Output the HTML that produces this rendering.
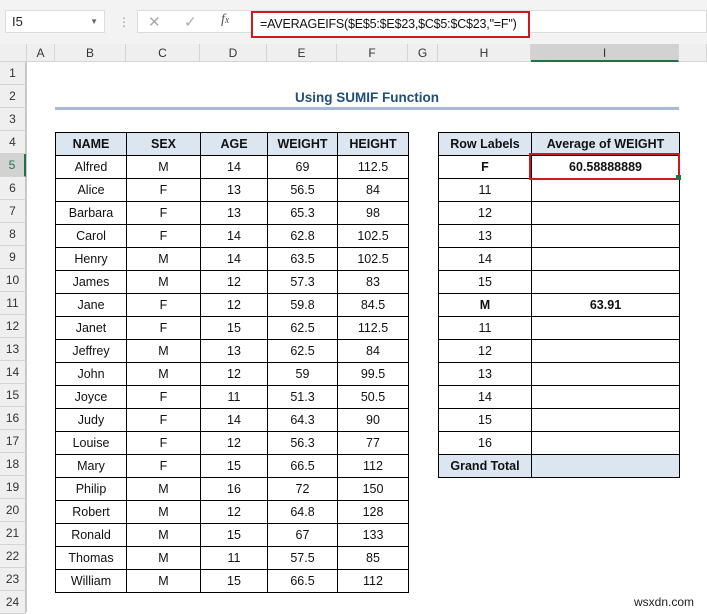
<!DOCTYPE html><html><head><style>
body{margin:0;width:707px;height:612px;overflow:hidden;background:#fff;font-family:"Liberation Sans",sans-serif;position:relative}
.a{position:absolute}
.top{left:0;top:0;width:707px;height:44px;background:#f3f3f3}
.ch{top:44px;height:18px;background:#efefef;border-bottom:1px solid #d4d4d4;font-size:12px;color:#333;text-align:center;line-height:18px;box-sizing:border-box;border-right:1px solid #d4d4d4}
.rh{left:0;width:26px;height:23px;background:#efefef;border-bottom:1px solid #d4d4d4;border-right:1px solid #c8c8c8;box-sizing:border-box;font-size:12px;color:#333;text-align:center;line-height:23px}
table{border-collapse:collapse;position:absolute;font-size:12.5px;font-family:"Liberation Sans",sans-serif;table-layout:fixed}
tr{height:23px}
td{border:1px solid #000;padding:0;text-align:center;color:#111;line-height:14px}
.h td{background:#dce6f1}
b{font-weight:bold}
</style></head><body>
<div class="a top"></div>
<div class="a" style="left:5px;top:10px;width:100px;height:23px;background:#fff;border:1px solid #dcdcdc;box-sizing:border-box;font-size:13px;line-height:21px;padding-left:6px;color:#222">I5<span style="position:absolute;right:6px;top:0;font-size:8px;color:#666">▼</span></div>
<div class="a" style="left:118px;top:15px;color:#999;font-size:12px">⋮</div>
<div class="a" style="left:137px;top:10px;width:570px;height:23px;background:#fff;border:1px solid #dcdcdc;box-sizing:border-box"></div>
<div class="a" style="left:148px;top:13px;color:#aaa;font-size:15px">✕</div>
<div class="a" style="left:184px;top:13px;color:#aaa;font-size:15px">✓</div>
<div class="a" style="left:221px;top:12px;color:#555;font-size:14px;font-style:italic;font-family:'Liberation Serif',serif">f<span style="font-size:10px">x</span></div>
<div class="a" style="left:251px;top:11px;width:279px;height:27px;border:2px solid #d0191f;box-sizing:border-box;background:#fff;font-size:12.5px;line-height:22px;padding-left:7px;color:#111;white-space:nowrap;letter-spacing:-0.2px">=AVERAGEIFS($E$5:$E$23,$C$5:$C$23,"=F")</div>
<div class="a ch" style="left:0;width:27px"></div>
<div class="a ch" style="left:27px;width:28px">A</div>
<div class="a ch" style="left:55px;width:71px">B</div>
<div class="a ch" style="left:126px;width:74px">C</div>
<div class="a ch" style="left:200px;width:67px">D</div>
<div class="a ch" style="left:267px;width:70px">E</div>
<div class="a ch" style="left:337px;width:71px">F</div>
<div class="a ch" style="left:408px;width:30px">G</div>
<div class="a ch" style="left:438px;width:93px">H</div>
<div class="a ch" style="left:531px;width:148px;background:#d2d2d2;border-bottom:2px solid #217346">I</div>
<div class="a ch" style="left:679px;width:28px"></div>
<div class="a" style="left:0;top:62px;width:27px;height:550px;background:#efefef;border-right:1px solid #c8c8c8;box-sizing:border-box"></div>
<div id="rows"></div>
<div class="a" style="left:55px;top:88px;width:624px;text-align:center;font-weight:bold;font-size:13.5px;color:#1f4e79;line-height:20px">Using SUMIF Function</div>
<div class="a" style="left:55px;top:107px;width:624px;height:3px;background:#a5bad6"></div>
<table style="left:55px;top:132px;width:353px">
<colgroup><col style="width:71px"><col style="width:74px"><col style="width:67px"><col style="width:70px"><col style="width:71px"></colgroup>
<tr class="h"><td><b>NAME</b></td><td><b>SEX</b></td><td><b>AGE</b></td><td><b>WEIGHT</b></td><td><b>HEIGHT</b></td></tr>
<tr><td>Alfred</td><td>M</td><td>14</td><td>69</td><td>112.5</td></tr>
<tr><td>Alice</td><td>F</td><td>13</td><td>56.5</td><td>84</td></tr>
<tr><td>Barbara</td><td>F</td><td>13</td><td>65.3</td><td>98</td></tr>
<tr><td>Carol</td><td>F</td><td>14</td><td>62.8</td><td>102.5</td></tr>
<tr><td>Henry</td><td>M</td><td>14</td><td>63.5</td><td>102.5</td></tr>
<tr><td>James</td><td>M</td><td>12</td><td>57.3</td><td>83</td></tr>
<tr><td>Jane</td><td>F</td><td>12</td><td>59.8</td><td>84.5</td></tr>
<tr><td>Janet</td><td>F</td><td>15</td><td>62.5</td><td>112.5</td></tr>
<tr><td>Jeffrey</td><td>M</td><td>13</td><td>62.5</td><td>84</td></tr>
<tr><td>John</td><td>M</td><td>12</td><td>59</td><td>99.5</td></tr>
<tr><td>Joyce</td><td>F</td><td>11</td><td>51.3</td><td>50.5</td></tr>
<tr><td>Judy</td><td>F</td><td>14</td><td>64.3</td><td>90</td></tr>
<tr><td>Louise</td><td>F</td><td>12</td><td>56.3</td><td>77</td></tr>
<tr><td>Mary</td><td>F</td><td>15</td><td>66.5</td><td>112</td></tr>
<tr><td>Philip</td><td>M</td><td>16</td><td>72</td><td>150</td></tr>
<tr><td>Robert</td><td>M</td><td>12</td><td>64.8</td><td>128</td></tr>
<tr><td>Ronald</td><td>M</td><td>15</td><td>67</td><td>133</td></tr>
<tr><td>Thomas</td><td>M</td><td>11</td><td>57.5</td><td>85</td></tr>
<tr><td>William</td><td>M</td><td>15</td><td>66.5</td><td>112</td></tr>
</table>
<table style="left:438px;top:132px;width:241px">
<colgroup><col style="width:93px"><col style="width:148px"></colgroup>
<tr class="h"><td><b>Row Labels</b></td><td><b>Average of WEIGHT</b></td></tr>
<tr><td><b>F</b></td><td><b>60.58888889</b></td></tr>
<tr><td>11</td><td></td></tr><tr><td>12</td><td></td></tr><tr><td>13</td><td></td></tr><tr><td>14</td><td></td></tr><tr><td>15</td><td></td></tr>
<tr><td><b>M</b></td><td><b>63.91</b></td></tr>
<tr><td>11</td><td></td></tr><tr><td>12</td><td></td></tr><tr><td>13</td><td></td></tr><tr><td>14</td><td></td></tr><tr><td>15</td><td></td></tr><tr><td>16</td><td></td></tr>
<tr class="h"><td><b>Grand Total</b></td><td></td></tr>
</table>
<div class="a" style="left:529px;top:153px;width:151px;height:27px;border:2px solid #d0191f;box-sizing:border-box"></div>
<div class="a" style="left:676px;top:175px;width:5px;height:5px;background:#217346"></div>
<div class="a" style="left:634px;top:595px;font-size:12px;color:#222">wsxdn.com</div>
<script>
var h='';for(var i=1;i<=24;i++){h+='<div class="a rh" style="top:'+(62+23*(i-1))+'px;'+(i==5?'background:#d2d2d2;color:#217346;border-right:2px solid #217346;':'')+'">'+i+'</div>';}
document.getElementById('rows').innerHTML=h;
</script>
</body></html>
